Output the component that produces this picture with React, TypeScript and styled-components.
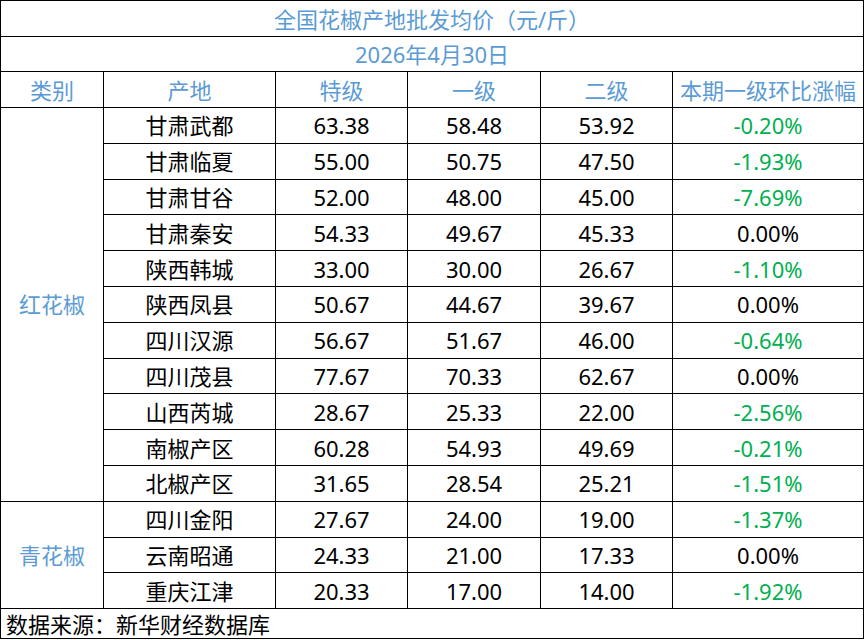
import React from "react";
import styled, { createGlobalStyle } from "styled-components";

const GlobalStyle = createGlobalStyle`
  html, body { margin: 0; padding: 0; background: #fff; }
  body { font-family: "Noto Sans", "Noto Sans CJK SC", sans-serif; }
`;

const Table = styled.table`
  width: 863px;
  border-collapse: collapse;
  table-layout: fixed;
  font-family: "Noto Sans", "Noto Sans CJK SC", sans-serif;
  font-size: 22px;
  color: #000;
`;

const Row = styled.tr<{ $h: number }>`
  height: ${(p) => p.$h}px;
`;

const Cell = styled.td<{ $tone?: "blue" | "green" | "black"; $align?: "left" | "center" }>`
  border: 1px solid #000;
  padding: 0 ${(p) => (p.$align === "left" ? "5px" : "0")};
  text-align: ${(p) => p.$align ?? "center"};
  vertical-align: middle;
  white-space: nowrap;
  line-height: 1;
  color: ${(p) => (p.$tone === "blue" ? "#5B9BD5" : p.$tone === "green" ? "#00B050" : "#000")};
`;

const widths = [103, 172, 132, 133, 132, 191];

type Item = [string, string, string, string, string];

const red: Item[] = [
  ["甘肃武都", "63.38", "58.48", "53.92", "-0.20%"],
  ["甘肃临夏", "55.00", "50.75", "47.50", "-1.93%"],
  ["甘肃甘谷", "52.00", "48.00", "45.00", "-7.69%"],
  ["甘肃秦安", "54.33", "49.67", "45.33", "0.00%"],
  ["陕西韩城", "33.00", "30.00", "26.67", "-1.10%"],
  ["陕西凤县", "50.67", "44.67", "39.67", "0.00%"],
  ["四川汉源", "56.67", "51.67", "46.00", "-0.64%"],
  ["四川茂县", "77.67", "70.33", "62.67", "0.00%"],
  ["山西芮城", "28.67", "25.33", "22.00", "-2.56%"],
  ["南椒产区", "60.28", "54.93", "49.69", "-0.21%"],
  ["北椒产区", "31.65", "28.54", "25.21", "-1.51%"],
];

const green: Item[] = [
  ["四川金阳", "27.67", "24.00", "19.00", "-1.37%"],
  ["云南昭通", "24.33", "21.00", "17.33", "0.00%"],
  ["重庆江津", "20.33", "17.00", "14.00", "-1.92%"],
];

const groups: { name: string; items: Item[] }[] = [
  { name: "红花椒", items: red },
  { name: "青花椒", items: green },
];

const headers = ["类别", "产地", "特级", "一级", "二级", "本期一级环比涨幅"];

export default function App() {
  return (
    <>
      <GlobalStyle />
      <Table>
        <colgroup>
          {widths.map((w, i) => (
            <col key={i} style={{ width: w }} />
          ))}
        </colgroup>
        <tbody>
          <Row $h={36}>
            <Cell colSpan={6} $tone="blue">全国花椒产地批发均价（元/斤）</Cell>
          </Row>
          <Row $h={35}>
            <Cell colSpan={6} $tone="blue">2026年4月30日</Cell>
          </Row>
          <Row $h={36}>
            {headers.map((h) => (
              <Cell key={h} $tone="blue">{h}</Cell>
            ))}
          </Row>
          {groups.map((g) =>
            g.items.map((it, i) => (
              <Row $h={35.8} key={g.name + it[0]}>
                {i === 0 && (
                  <Cell rowSpan={g.items.length} $tone="blue">
                    {g.name}
                  </Cell>
                )}
                <Cell>{it[0]}</Cell>
                <Cell>{it[1]}</Cell>
                <Cell>{it[2]}</Cell>
                <Cell>{it[3]}</Cell>
                <Cell $tone={it[4].startsWith("-") ? "green" : "black"}>{it[4]}</Cell>
              </Row>
            ))
          )}
          <Row $h={30}>
            <Cell colSpan={6} $align="left">数据来源：新华财经数据库</Cell>
          </Row>
        </tbody>
      </Table>
    </>
  );
}
